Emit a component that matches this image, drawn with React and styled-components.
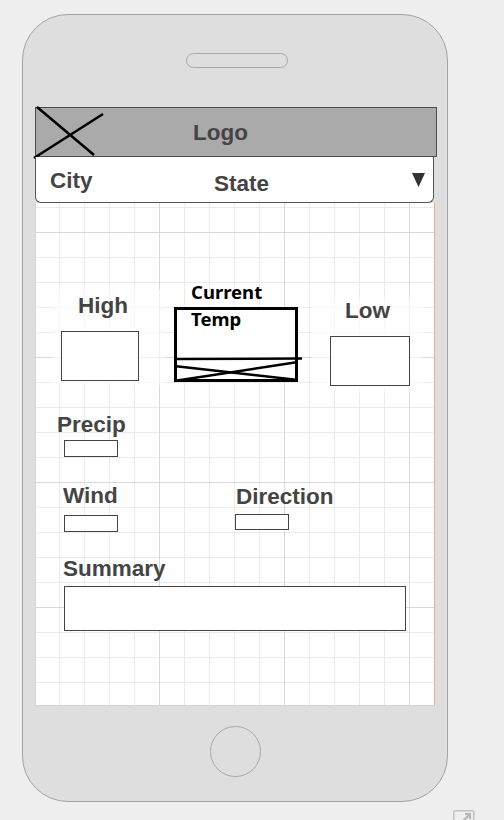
import React from "react";
import styled, { createGlobalStyle } from "styled-components";

const Global = createGlobalStyle`
  html, body { margin: 0; padding: 0; background: #eeeeee; }
  body { font-family: "Liberation Sans", Arial, sans-serif; }
`;

const Page = styled.div`
  width: 504px;
  height: 820px;
  box-sizing: border-box;
  padding: 14px 0 0 22px;
  overflow: hidden;
`;

const Phone = styled.div`
  width: 426px;
  height: 788px;
  box-sizing: border-box;
  border: 1px solid #a3a3a3;
  border-radius: 46px;
  background: #dedede;
  display: flex;
  flex-direction: column;
  align-items: center;
`;

const Speaker = styled.div`
  margin-top: 38px;
  margin-left: 4px;
  width: 102px;
  height: 15px;
  box-sizing: border-box;
  border: 1px solid #a8a8a8;
  border-radius: 8px;
`;

const Screen = styled.div`
  margin-top: 39px;
  width: 400px;
  display: flex;
  flex-direction: column;
  align-items: flex-start;
`;

const LogoBar = styled.div`
  width: 402px;
  height: 50px;
  box-sizing: border-box;
  background: #aaaaaa;
  border: 1px solid #4a4a4a;
  display: flex;
  align-items: center;
`;

const LogoMark = styled.svg`
  margin-left: -3px;
  flex: 0 0 auto;
  overflow: visible;
`;

const LogoText = styled.span`
  margin-left: 90px;
  margin-top: 2px;
  font-size: 22.5px;
  line-height: 22px;
  font-weight: 700;
  color: #444444;
`;

const Select = styled.div`
  width: 399px;
  height: 46px;
  box-sizing: border-box;
  background: #ffffff;
  border: 1px solid #555555;
  border-top: none;
  border-radius: 0 0 6px 6px;
  display: flex;
  align-items: flex-start;
  padding-left: 14px;
`;

const SelectText = styled.span`
  flex: 0 0 ${(p) => p.$w || "auto"};
  margin-top: ${(p) => p.$mt}px;
  font-size: 22.5px;
  line-height: 25px;
  font-weight: 700;
  color: #444444;
`;

const Caret = styled.svg`
  margin-left: auto;
  margin-right: 8px;
  margin-top: 16px;
`;

const Canvas = styled.div`
  width: 400px;
  height: 503px;
  box-sizing: border-box;
  border-left: 1px solid #d6d6d6;
  border-right: 1px solid #f2a899;
  border-bottom: 1px solid #d6d6d6;
  background-color: #ffffff;
  background-image:
    linear-gradient(to right, #d9d9d9 1px, transparent 1px),
    linear-gradient(to bottom, #d9d9d9 1px, transparent 1px),
    linear-gradient(to right, #ebebeb 1px, transparent 1px),
    linear-gradient(to bottom, #ebebeb 1px, transparent 1px);
  background-size: 125px 125px, 125px 125px, 25px 25px, 25px 25px;
  background-position: 123px 29px, 123px 29px, 23px 4px, 23px 4px;
  display: flex;
  flex-direction: column;
  align-items: flex-start;
`;

const TempRow = styled.div`
  display: flex;
  align-items: flex-start;
`;

const Patch = styled.div`
  margin-left: ${(p) => p.$ml}px;
  margin-top: ${(p) => p.$mt}px;
  width: ${(p) => p.$w}px;
  height: ${(p) => p.$h}px;
  box-sizing: border-box;
  padding-top: ${(p) => p.$pt || 0}px;
  background: rgba(255, 255, 255, 0.6);
  display: flex;
  flex-direction: column;
  align-items: flex-start;
`;

const Label = styled.div`
  margin-left: ${(p) => p.$ml || 0}px;
  margin-top: ${(p) => p.$mt || 0}px;
  font-size: 22.5px;
  line-height: 25px;
  font-weight: 700;
  color: #444444;
  white-space: nowrap;
`;

const Box = styled.div`
  margin-left: ${(p) => p.$ml || 0}px;
  margin-top: ${(p) => p.$mt || 0}px;
  width: ${(p) => p.$w}px;
  height: ${(p) => p.$h}px;
  box-sizing: border-box;
  border: 1px solid #444444;
  background: #ffffff;
`;

const CurrentCol = styled.div`
  margin-left: 9px;
  margin-top: 75px;
  display: flex;
  flex-direction: column;
  align-items: flex-start;
`;

const CurrentLabel = styled.div`
  position: relative;
  z-index: 1;
  padding-left: 17px;
  font-family: "Noto Sans", "Open Sans", sans-serif;
  font-size: 18.5px;
  line-height: 27px;
  font-weight: 700;
  color: #000000;
`;

const CurrentBox = styled.div`
  margin-top: -25px;
  width: 124px;
  height: 75px;
  box-sizing: border-box;
  border: 3px solid #000000;
  background: #ffffff;
  display: flex;
  flex-direction: column;
  justify-content: flex-end;
`;

const Scribble = styled.svg`
  display: block;
  overflow: visible;
`;

const FieldRow = styled.div`
  margin-top: ${(p) => p.$mt}px;
  margin-left: ${(p) => p.$ml}px;
  display: flex;
  align-items: flex-start;
`;

const Field = styled.div`
  width: ${(p) => (p.$w ? `${p.$w}px` : "auto")};
  margin-top: ${(p) => p.$mt || 0}px;
  display: flex;
  flex-direction: column;
  align-items: flex-start;
`;

const HomeButton = styled.div`
  margin-top: 20px;
  width: 51px;
  height: 51px;
  box-sizing: border-box;
  border: 1px solid #a8a8a8;
  border-radius: 50%;
`;

const CornerIcon = styled.svg`
  display: block;
  margin-top: 8px;
  margin-left: 431px;
`;

export default function App() {
  return (
    <>
      <Global />
      <Page>
        <Phone>
          <Speaker />
          <Screen>
            <LogoBar>
              <LogoMark width="70" height="50" viewBox="0 0 70 50">
                <line x1="4" y1="0" x2="61" y2="48" stroke="#000" strokeWidth="2.5" />
                <line x1="1" y1="51" x2="70" y2="7" stroke="#000" strokeWidth="2.5" />
              </LogoMark>
              <LogoText>Logo</LogoText>
            </LogoBar>
            <Select>
              <SelectText $w="164px" $mt={11}>City</SelectText>
              <SelectText $mt={14}>State</SelectText>
              <Caret width="13" height="14" viewBox="0 0 13 14">
                <polygon points="0,0 13,0 6.5,14" fill="#333" />
              </Caret>
            </Select>
            <Canvas>
              <TempRow>
                <Patch $ml={16} $mt={87} $w={113} $h={95} $pt={3}>
                  <Label $ml={26}>High</Label>
                  <Box $ml={9} $mt={13} $w={78} $h={50} />
                </Patch>
                <CurrentCol>
                  <CurrentLabel>
                    Current
                    <br />
                    Temp
                  </CurrentLabel>
                  <CurrentBox>
                    <Scribble width="118" height="21" viewBox="0 0 118 21">
                      <line x1="-3" y1="1" x2="125" y2="0.5" stroke="#000" strokeWidth="2.5" />
                      <line x1="-3" y1="23" x2="121" y2="4" stroke="#000" strokeWidth="2.5" />
                      <line x1="-3" y1="8" x2="121" y2="22" stroke="#000" strokeWidth="2.5" />
                    </Scribble>
                  </CurrentBox>
                </CurrentCol>
                <Patch $ml={14} $mt={95} $w={110} $h={95}>
                  <Label $ml={33}>Low</Label>
                  <Box $ml={18} $mt={13} $w={80} $h={50} />
                </Patch>
              </TempRow>

              <Label $ml={21} $mt={19}>Precip</Label>
              <Box $ml={28} $mt={3} $w={54} $h={17} />

              <FieldRow $mt={26} $ml={27}>
                <Field $w={173}>
                  <Label>Wind</Label>
                  <Box $ml={1} $mt={7} $w={54} $h={17} />
                </Field>
                <Field $mt={1}>
                  <Label>Direction</Label>
                  <Box $ml={-1} $mt={5} $w={54} $h={16} />
                </Field>
              </FieldRow>

              <Label $ml={27} $mt={24}>Summary</Label>
              <Box $ml={28} $mt={5} $w={342} $h={45} />
            </Canvas>
          </Screen>
          <HomeButton />
        </Phone>
        <CornerIcon width="22" height="14" viewBox="0 0 22 14">
          <rect x="0.75" y="0.75" width="20" height="16" rx="1.5" fill="none" stroke="#c2c2c2" strokeWidth="1.5" />
          <line x1="10" y1="11" x2="17" y2="4" stroke="#b5b5b5" strokeWidth="2" />
          <polyline points="12,4 17,4 17,9" fill="none" stroke="#b5b5b5" strokeWidth="2" />
        </CornerIcon>
      </Page>
    </>
  );
}
